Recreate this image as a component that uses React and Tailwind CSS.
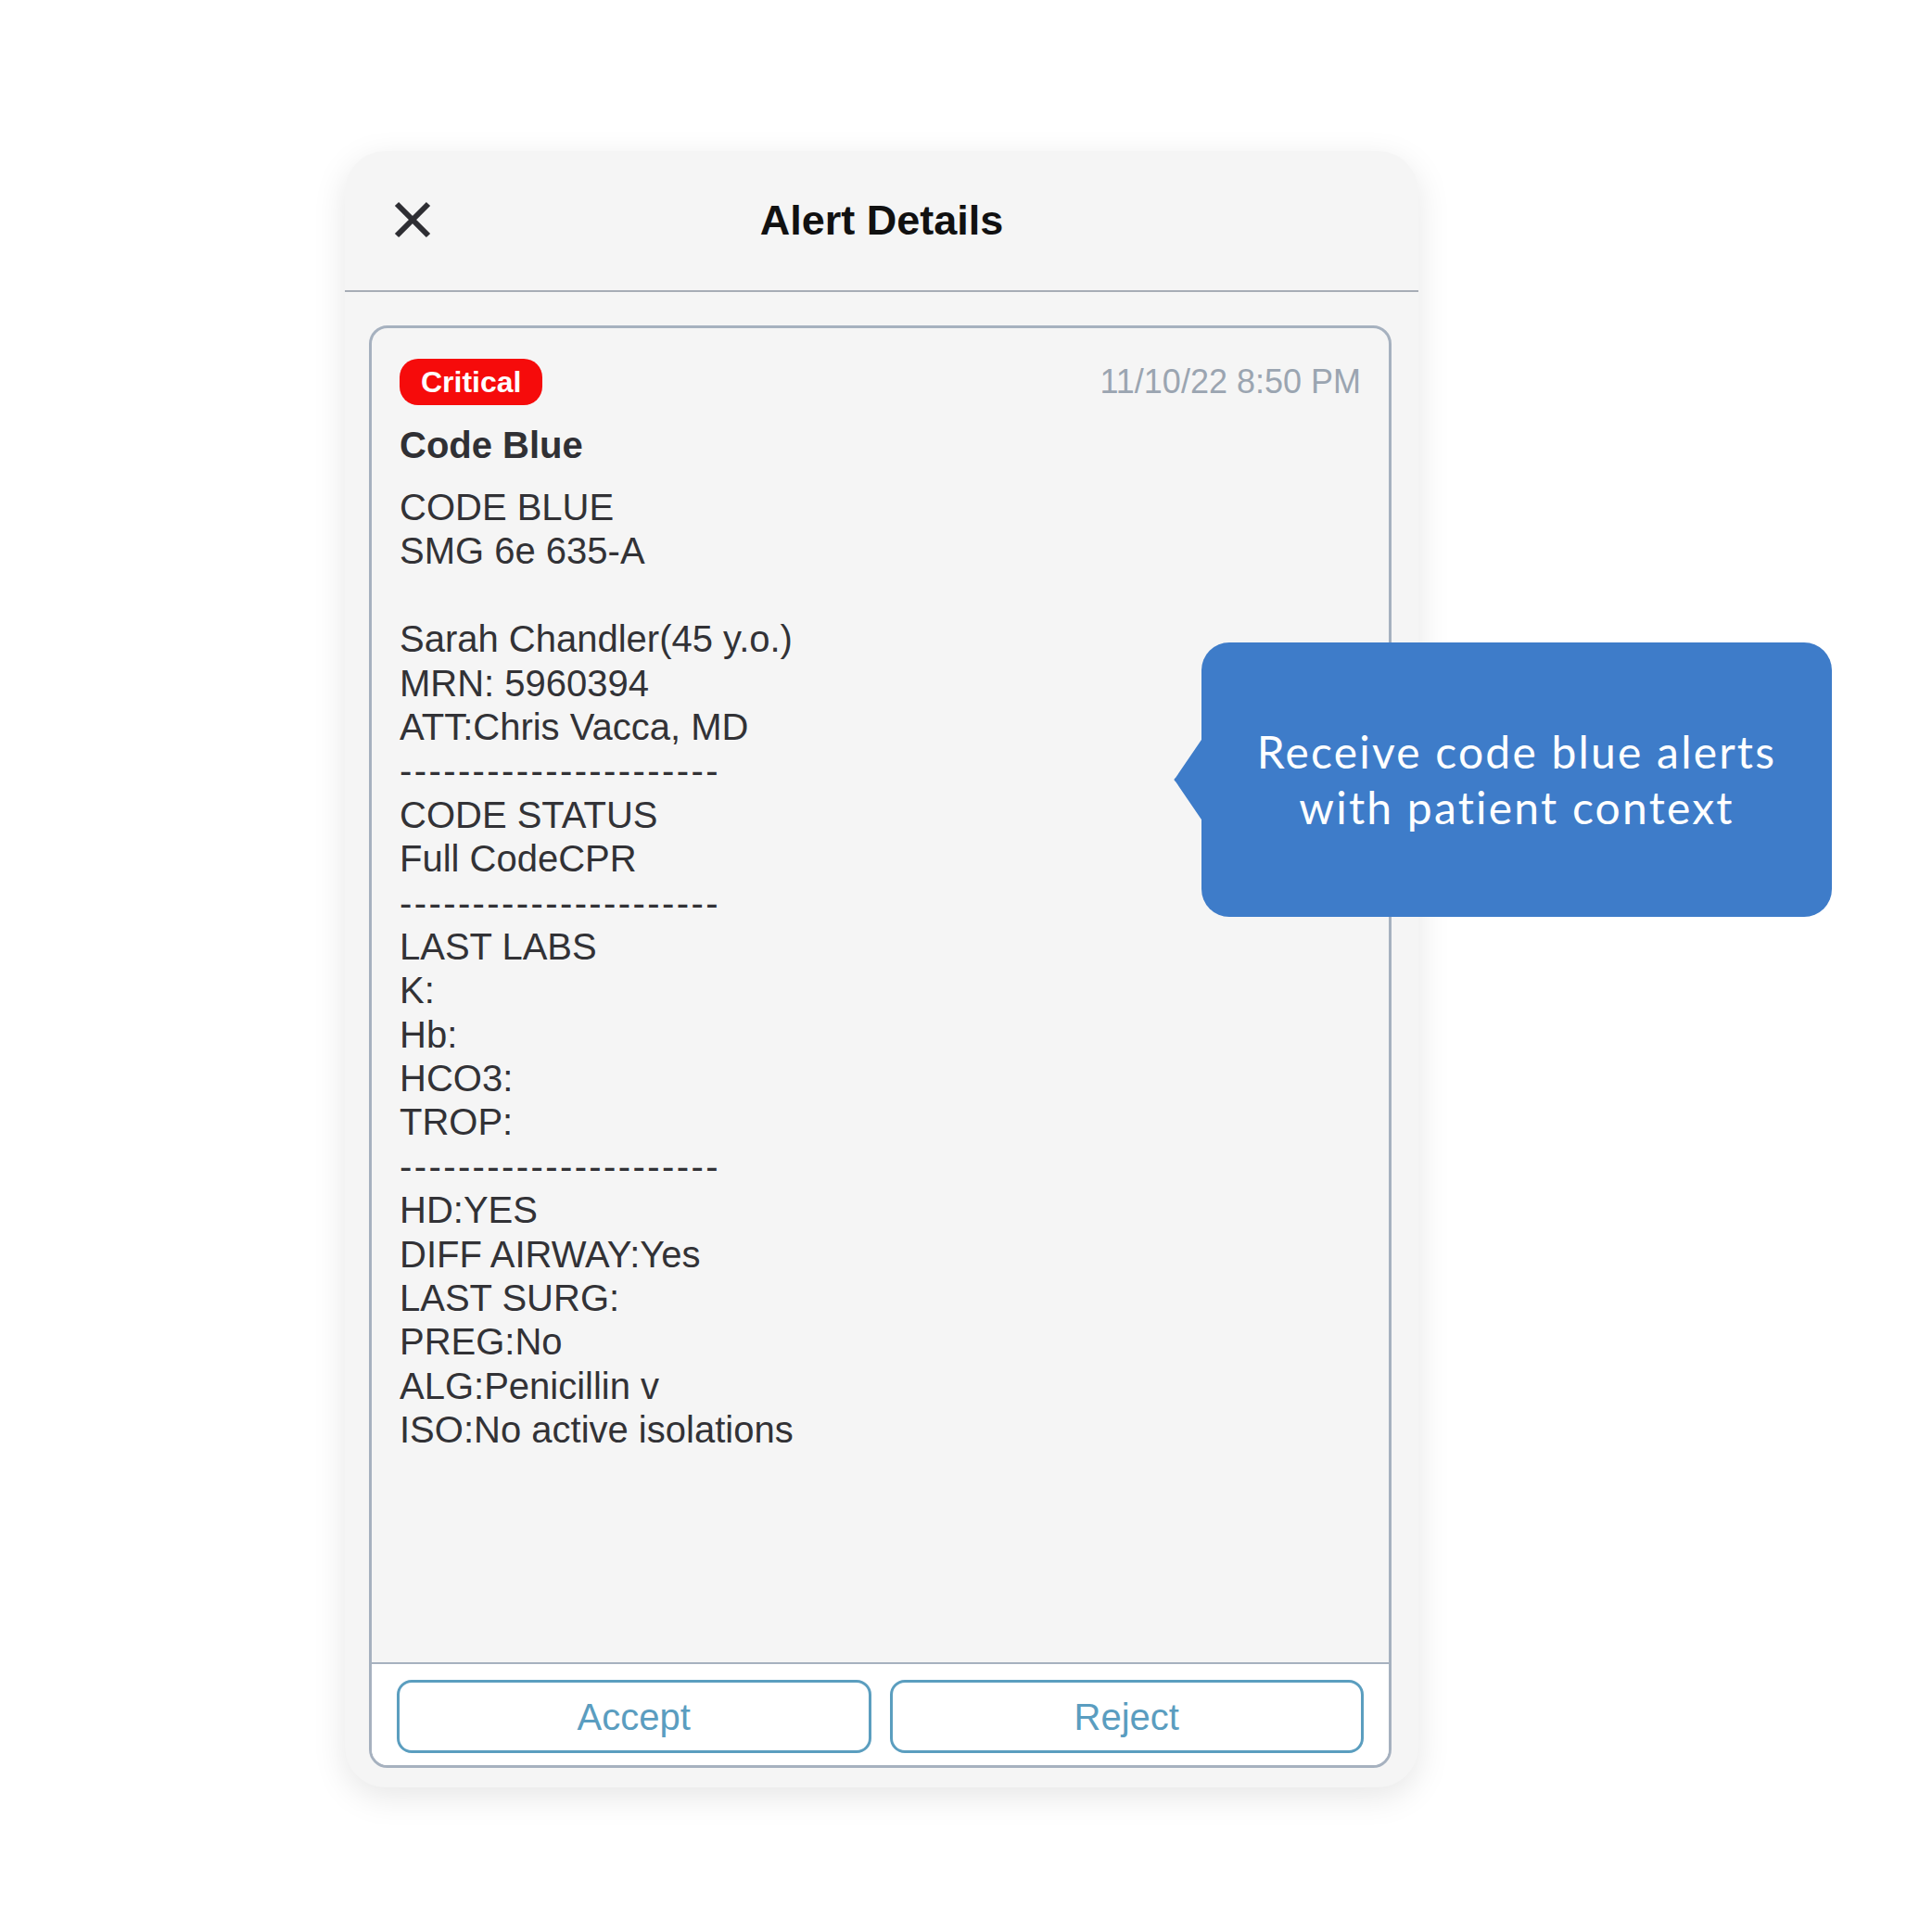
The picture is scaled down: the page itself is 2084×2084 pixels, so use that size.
import React from "react";

const lines = [
    "CODE BLUE",
    "SMG 6e 635-A",
    "",
    "Sarah Chandler(45 y.o.)",
    "MRN: 5960394",
    "ATT:Chris Vacca, MD",
    "----------------------",
    "CODE STATUS",
    "Full CodeCPR",
    "----------------------",
    "LAST LABS",
    "K:",
    "Hb:",
    "HCO3:",
    "TROP:",
    "----------------------",
    "HD:YES",
    "DIFF AIRWAY:Yes",
    "LAST SURG:",
    "PREG:No",
    "ALG:Penicillin v",
    "ISO:No active isolations",
];

const CloseIcon = () => (
    <svg width="42" height="40" viewBox="0 0 42 40" fill="none">
        <path d="M4 3 L38 37 M38 3 L4 37" stroke="#2e2e33" strokeWidth="6" strokeLinecap="butt" />
    </svg>
);

const Callout = () => (
    <div className="absolute left-[1264px] top-[693px] flex items-center">
        <svg width="34" height="92" viewBox="0 0 34 92" className="-mr-[2px]">
            <path d="M34 0 L4 44 Q1 46 4 48 L34 92 Z" fill="#3e7cc9" />
        </svg>
        <div className="flex h-[296px] w-[680px] items-center justify-center rounded-[30px] bg-[#3e7cc9] text-center font-['Lato',sans-serif] text-[48px] leading-[60px] tracking-[2.2px] text-white">
            <p>
                Receive code blue alerts
                <br />
                with patient context
            </p>
        </div>
    </div>
);

const App = () => {
    return (
        <div className="relative h-[2084px] w-[2084px] overflow-hidden bg-white pl-[372px] pt-[163px] font-['Liberation_Sans',Arial,sans-serif]">
            <div className="flex h-[1765px] w-[1158px] flex-col rounded-[44px] bg-[#f5f5f5] shadow-[0_10px_36px_rgba(0,0,0,0.10)]">
                {/* header */}
                <div className="relative flex h-[152px] items-center justify-center border-b-2 border-b-[#a7adb6]">
                    <div className="absolute left-[52px] top-[54px]">
                        <CloseIcon />
                    </div>
                    <h1 className="text-[45px] font-bold text-[#111]">Alert Details</h1>
                </div>

                <div className="flex flex-1 flex-col pb-[21px] pl-[26px] pr-[29px] pt-[36px]">
                    <div className="flex flex-1 flex-col overflow-hidden rounded-[20px] border-[3px] border-[#a6b1bf] bg-[#f5f5f5]">
                        <div className="flex-1 px-[30px] pt-[31px]">
                            <div className="flex items-center justify-between">
                                <span className="flex h-[50px] items-center rounded-[20px] bg-[#f60b0b] px-[23px] text-[32px] font-bold text-white">
                                    Critical
                                </span>
                                <span className="text-[36px] text-[#9ba5b1]">11/10/22 8:50 PM</span>
                            </div>
                            <h2 className="mt-[18px] text-[40px] font-bold leading-[47px] text-[#303034]">Code Blue</h2>
                            <div className="mt-[20px] text-[40px] leading-[47.4px] text-[#323236]">
                                {lines.map((line, i) => (
                                    <div key={i} className={line.startsWith("-") ? "h-[47.4px] tracking-[2.4px]" : "h-[47.4px]"}>
                                        {line}
                                    </div>
                                ))}
                            </div>
                        </div>
                        <div className="flex gap-[20px] border-t-2 border-t-[#a6b1bf] bg-white px-[27px] pb-[13px] pt-[17px]">
                            <button className="flex h-[79px] flex-1 items-center justify-center rounded-[16px] border-[3px] border-[#5b9ebf] text-[40px] text-[#5a9dc0]">
                                Accept
                            </button>
                            <button className="flex h-[79px] flex-1 items-center justify-center rounded-[16px] border-[3px] border-[#5b9ebf] text-[40px] text-[#5a9dc0]">
                                Reject
                            </button>
                        </div>
                    </div>
                </div>
            </div>
            <Callout />
        </div>
    );
};

export default App;
